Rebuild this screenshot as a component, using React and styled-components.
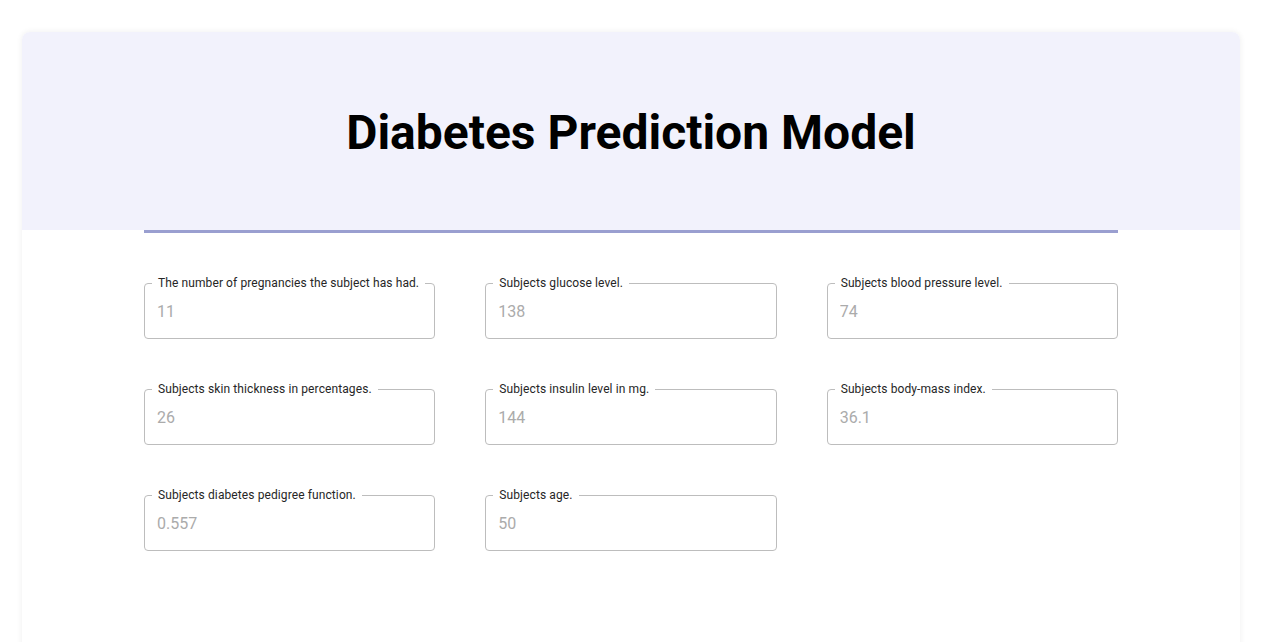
import React from "react";
import styled, { createGlobalStyle } from "styled-components";

const GlobalStyle = createGlobalStyle`
  html, body {
    margin: 0;
    padding: 0;
    background: #fff;
    font-family: Roboto, "Liberation Sans", sans-serif;
  }
  * {
    box-sizing: border-box;
  }
`;

const Page = styled.div`
  padding: 32px 23px 0 22px;
`;

const Card = styled.main`
  min-height: 700px;
  background: #fff;
  border-radius: 8px;
  box-shadow: 0 0 6px rgba(0, 0, 0, 0.07);
  overflow: hidden;
`;

const Header = styled.header`
  height: 198px;
  background: #f2f2fc;
  display: flex;
  align-items: center;
  justify-content: center;
`;

const Title = styled.h1`
  margin: 0;
  padding-top: 2px;
  font-size: 48px;
  font-weight: 700;
  color: #000;
`;

const Body = styled.section`
  padding: 0 122px;
`;

const Rule = styled.div`
  height: 3px;
  background: #9a9fd0;
`;

const Grid = styled.form`
  margin-top: 50px;
  display: grid;
  grid-template-columns: repeat(3, 1fr);
  gap: 50px;
`;

const Field = styled.label`
  position: relative;
  display: block;
  height: 56px;
  border: 1px solid #bdbdbd;
  border-radius: 4px;
`;

const Legend = styled.span`
  position: absolute;
  top: -8px;
  left: 7px;
  padding: 0 6px;
  background: #fff;
  font-size: 12px;
  line-height: 14px;
  letter-spacing: 0.1px;
  color: #262626;
  white-space: nowrap;
`;

const Input = styled.input`
  width: 100%;
  height: 100%;
  border: none;
  outline: none;
  background: transparent;
  padding: 0 12px;
  font-family: Roboto, "Liberation Sans", sans-serif;
  font-size: 16px;
  color: #333;

  &::placeholder {
    color: #ababab;
  }
`;

const fields = [
  { label: "The number of pregnancies the subject has had.", value: "11" },
  { label: "Subjects glucose level.", value: "138" },
  { label: "Subjects blood pressure level.", value: "74" },
  { label: "Subjects skin thickness in percentages.", value: "26" },
  { label: "Subjects insulin level in mg.", value: "144" },
  { label: "Subjects body-mass index.", value: "36.1" },
  { label: "Subjects diabetes pedigree function.", value: "0.557" },
  { label: "Subjects age.", value: "50" },
];

export default function App() {
  return (
    <Page>
      <GlobalStyle />
      <Card>
        <Header>
          <Title>Diabetes Prediction Model</Title>
        </Header>
        <Body>
          <Rule />
          <Grid>
            {fields.map((f) => (
              <Field key={f.label}>
                <Legend>{f.label}</Legend>
                <Input placeholder={f.value} />
              </Field>
            ))}
          </Grid>
        </Body>
      </Card>
    </Page>
  );
}
